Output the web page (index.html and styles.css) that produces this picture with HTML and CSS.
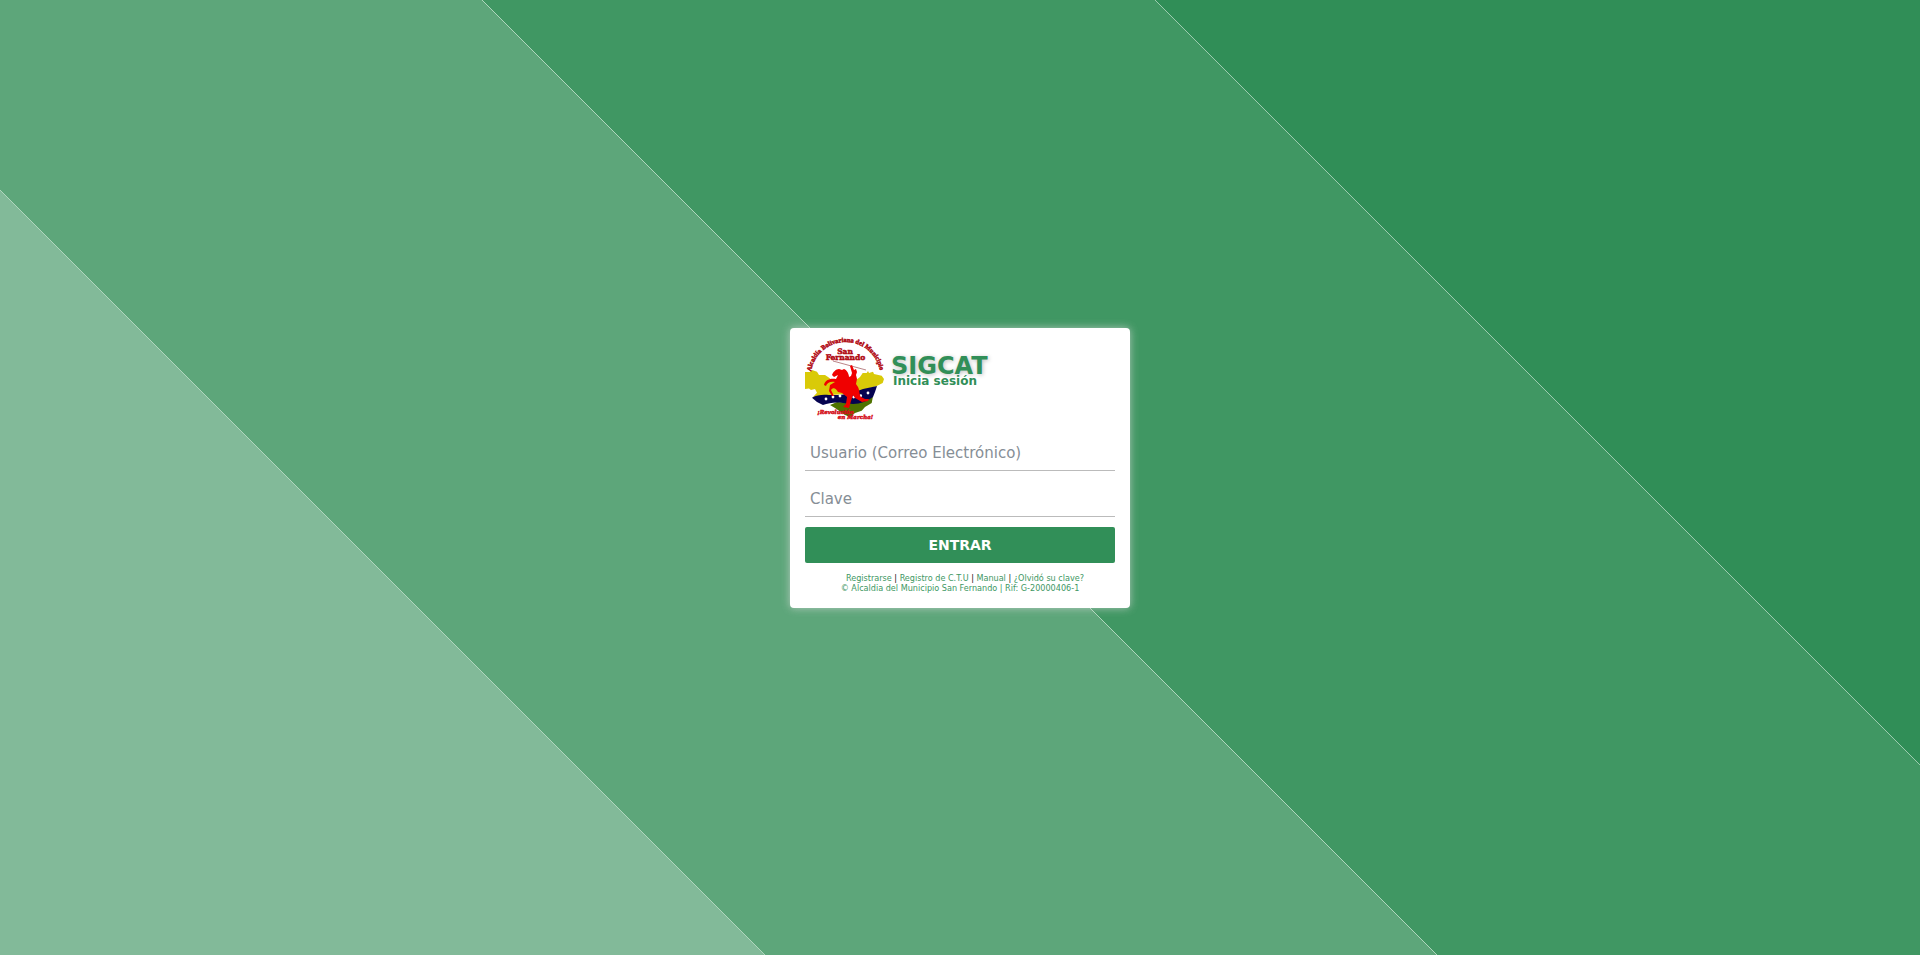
FILE: index.html
```html
<!DOCTYPE html>
<html lang="es">
<head>
<meta charset="utf-8">
<meta name="viewport" content="width=device-width, initial-scale=1">
<title>SIGCAT - Inicia sesión</title>
<link rel="stylesheet" href="styles.css">
</head>
<body>
<main class="card">
  <header class="brand">
    <svg class="logo" viewBox="0 0 160 168" role="img" aria-label="Alcaldía Bolivariana del Municipio San Fernando">
      <defs>
        <path id="arc" d="M12 69A70 70 0 0 1 151 84"/>
      </defs>
      <g transform="scale(2)">
        <path fill="#d9ca08" d="M0 35L5 35 7 33 12 34.700 14 38 20 38 23 40 27 43 51 43 55 40 57.700 36 61.700 36 63 34 64 36 68 34.700 69 37 76.700 38.700 79 42 77.700 46 71.700 49 58 53 45 57 25 58 8 60 12 55.700 10 52 6 53 4 51.500 0 52z"/>
        <path fill="#4f7200" d="M25 68L32 65 48 66 68 59 66.700 66 60 70 56.700 73.700 50 76 45 80 40 78 30 71z"/>
        <path fill="#050350" d="M7 60.700C12 58 17 57.500 24 58 40 58.500 48 56 58 52L72 49 70 55 68 60C62 64 56 67 48 67L38 66C30 65 24 66 18 68L12 65z"/>
        <g class="stars">
          <circle cx="21" cy="62" r="1.400"/><circle cx="28" cy="60" r="1.400"/><circle cx="35" cy="59" r="1.400"/><circle cx="48.700" cy="60" r="1.400"/><circle cx="55.700" cy="58.700" r="1.400"/><circle cx="63" cy="56" r="1.400"/>
        </g>
        <path fill="none" stroke="#a8646a" stroke-width=".8" d="M28 24L61 33"/>
        <path fill="#f00000" d="M27 38C28 35 31 32 34 32L37 33 39 32C42 33 44 37 44 40L46 39 47 36 45 29 47 28 49 33 51 32 52 35 51 38 52 42 51 47 53 50C55 54 54 58 56 60L60 62 64 62 63 64 57 65 50 61 48 58 46 64 44 71 38 70 41 67 42 60 37 56 33 55C31 51 28 50 26 53L29 59 27 59 24 54 25 48 30 45C25 44 22 46 21 49L19 48C20 43 25 41 31 42L33 38 29 40z"/>
      </g>
      <text class="ring"><textPath href="#arc">Alcaldía Bolivariana del Municipio</textPath></text>
      <text class="place" x="80" y="33">San</text>
      <text class="place" x="81" y="46">Fernando</text>
      <text class="motto" x="61" y="154">¡Revolución</text>
      <text class="motto" x="101" y="163">en Marcha!</text>
    </svg>
    <div class="titles">
      <h1 class="title">SIGCAT</h1>
      <h2 class="subtitle">Inicia sesión</h2>
    </div>
  </header>
  <form class="form">
    <input class="field" type="text" name="usuario" aria-label="Usuario (Correo Electrónico)" placeholder="Usuario (Correo Electrónico)">
    <input class="field" type="password" name="clave" aria-label="Clave" placeholder="Clave">
    <button class="submit" type="submit">ENTRAR</button>
  </form>
  <footer class="footer">
    <nav class="links"><a href="#">Registrarse</a> | <a href="#">Registro de C.T.U</a> | <a href="#">Manual</a> | <a href="#">¿Olvidó su clave?</a></nav>
    <div class="legal">© Alcaldia del Municipio San Fernando | Rif: G-20000406-1</div>
  </footer>
</main>
</body>
</html>
```
FILE: styles.css
```css
* {
  box-sizing: border-box;
}

body {
  margin: 0;
  min-height: 100vh;
  display: flex;
  align-items: center;
  justify-content: center;
  padding-bottom: 19px;
  font-family: "DejaVu Sans", sans-serif;
  background: linear-gradient(45deg,
    #82ba99 calc(50% - 476px),
    #aed6bc calc(50% - 476px) calc(50% - 475px),
    #5da67a calc(50% - 475px) calc(50% - 1px),
    #aed6bc calc(50% - 1px) 50%,
    #409763 50% calc(50% + 475px),
    #9ccbae calc(50% + 475px) calc(50% + 476px),
    #308e57 calc(50% + 476px));
}

.card {
  width: 340px;
  max-width: 100%;
  padding: 9px 15px 15px;
  border-radius: 4px;
  background: #fff;
  box-shadow: 0 0 8px rgba(220, 220, 220, 0.7);
}

.brand {
  display: flex;
  gap: 6px;
}

.logo {
  width: 80px;
  height: 84px;
  overflow: visible;
}

.ring,
.place {
  font-weight: bold;
  fill: #b00710;
  stroke: #b00710;
}

.ring {
  font-family: "Liberation Serif", serif;
  font-size: 13px;
  stroke-width: 1px;
}

.place {
  font-family: "DejaVu Serif", serif;
  font-size: 15px;
  text-anchor: middle;
  stroke-width: 1px;
}

.motto {
  font-family: "DejaVu Serif", serif;
  font-size: 11px;
  font-weight: bold;
  font-style: italic;
  fill: #d4101a;
  stroke: #d4101a;
  stroke-width: 1px;
  text-anchor: middle;
}

.stars {
  fill: #fff;
}

.titles {
  padding-top: 17px;
  color: #318f58;
}

.title,
.subtitle {
  margin: 0;
  font-weight: bold;
}

.title {
  font-size: 24px;
  line-height: 24px;
  text-shadow: 1px 1px 4px rgba(0, 0, 0, 0.25);
}

.subtitle {
  padding-left: 2px;
  font-size: 12px;
  line-height: 6px;
}

.form {
  display: flex;
  flex-direction: column;
  gap: 10px;
  padding-top: 14px;
}

.field {
  height: 36px;
  padding: 0 5px;
  border: 0;
  border-bottom: 1px solid #bbb;
  background: transparent;
  font: 15px "DejaVu Sans", sans-serif;
  color: #333;
}

.field::placeholder {
  color: #868e96;
}

.submit {
  height: 36px;
  border: 0;
  border-radius: 2px;
  background: #318f58;
  color: #fff;
  font: bold 14px "DejaVu Sans", sans-serif;
}

.footer {
  padding-top: 10px;
  font-family: "DejaVu Sans Condensed", "DejaVu Sans", sans-serif;
  font-size: 9px;
  line-height: 10px;
  text-align: center;
  color: #409763;
}

.links {
  padding-left: 10px;
  color: #111;
}

.links a {
  color: #409763;
  text-decoration: none;
}
```
